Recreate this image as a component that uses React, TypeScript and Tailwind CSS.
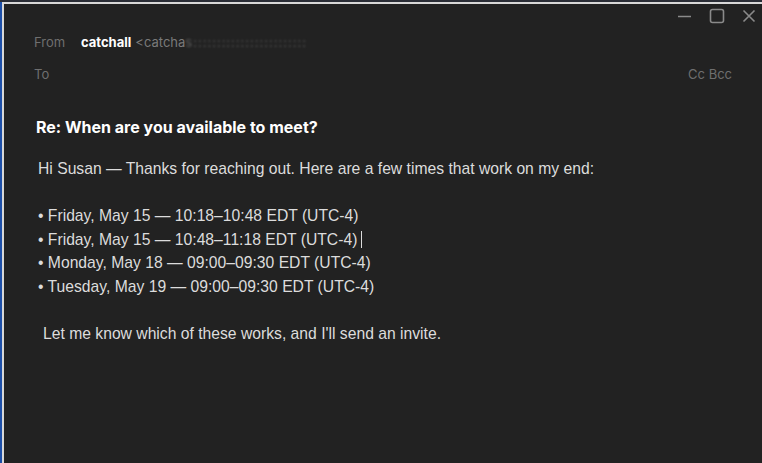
import React from "react";

export default function App() {
  const lines = [
    "• Friday, May 15 — 10:18–10:48 EDT (UTC-4)",
    "• Friday, May 15 — 10:48–11:18 EDT (UTC-4)",
    "• Monday, May 18 — 09:00–09:30 EDT (UTC-4)",
    "• Tuesday, May 19 — 09:00–09:30 EDT (UTC-4)",
  ];
  return (
    <div className="w-[762px] h-[463px] overflow-hidden bg-[#1b1f2b] flex flex-col">
      <div className="h-[2px] bg-[#2a2d36] shrink-0" />
      <div className="flex flex-1 min-h-0">
        <div className="w-[2px] bg-[#1d4fa8] shrink-0" />
        <div className="flex-1 border-t-2 border-l-2 border-[#d8d8d8] bg-[#222222] flex flex-col" style={{ fontFamily: "Inter, 'Liberation Sans', sans-serif" }}>
          <div className="flex justify-end items-center h-[24px] pr-[5px] gap-[16px]">
            <svg width="16" height="16" viewBox="0 0 16 16"><path d="M1 8.5h13" stroke="#8a8a8a" strokeWidth="1.5" /></svg>
            <svg width="16" height="16" viewBox="0 0 16 16"><rect x="1.5" y="1.5" width="13" height="13" rx="2" fill="none" stroke="#8a8a8a" strokeWidth="1.6" /></svg>
            <svg width="16" height="16" viewBox="0 0 16 16"><path d="M2.5 2.5l11 11M13.5 2.5l-11 11" stroke="#8a8a8a" strokeWidth="1.6" /></svg>
          </div>
          <div className="pl-[30px] pr-[30px] text-[13px]">
            <div className="flex items-center h-[30px]">
              <span className="text-[#6f6f6f] w-[47px]">From</span>
              <span className="text-white font-bold">catchall</span>
              <span className="text-[#7a7a7a] ml-[4px]">&lt;catcha</span>
              <span className="text-[#5a5a5a] blur-[1.2px] tracking-[1px]">s::::::::::::::::::::::::</span>
            </div>
            <div className="flex items-center justify-between h-[34px]">
              <span className="text-[#6f6f6f]">To</span>
              <span className="text-[#6f6f6f]">Cc Bcc</span>
            </div>
          </div>
          <div className="pl-[32px] mt-[25px] text-[16px] font-bold text-white leading-[20px]">
            Re: When are you available to meet?
          </div>
          <div className="pl-[34px] mt-[20px] text-[15.7px] leading-[23.6px] text-[#dcdcdc]" style={{ fontFamily: "'Liberation Sans', Arial, sans-serif" }}>
            <div>Hi Susan — Thanks for reaching out. Here are a few times that work on my end:</div>
            <div>&nbsp;</div>
            {lines.map((l, i) => (
              <div key={i} className="flex items-center">
                {l}
                {i === 1 && <span className="inline-block w-[1px] h-[17px] bg-[#dcdcdc] ml-[4px]" />}
              </div>
            ))}
            <div>&nbsp;</div>
            <div className="pl-[5px]">Let me know which of these works, and I'll send an invite.</div>
          </div>
        </div>
      </div>
    </div>
  );
}
